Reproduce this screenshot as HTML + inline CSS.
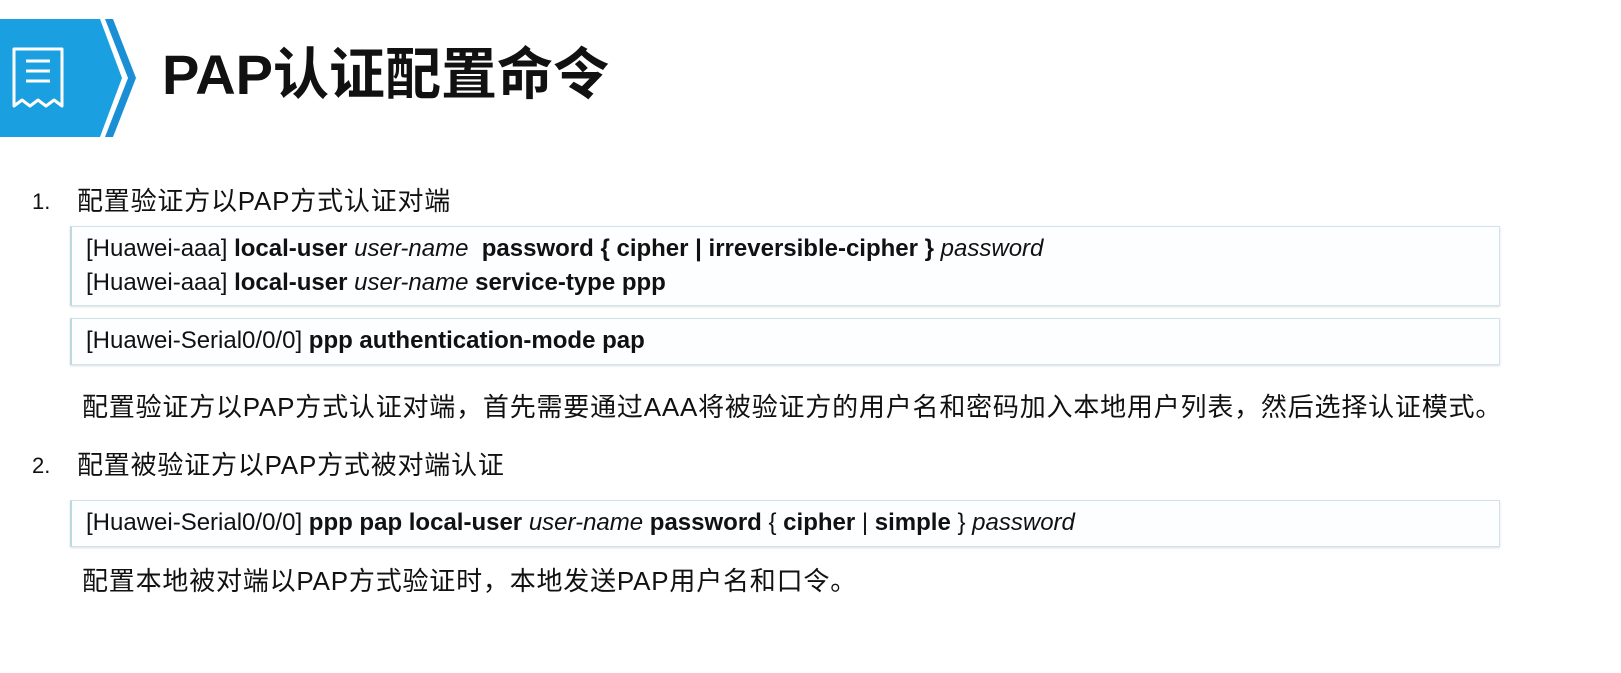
<!DOCTYPE html>
<html><head><meta charset="utf-8"><style>
body{margin:0;width:1621px;height:673px;background:#fff;position:relative;overflow:hidden;font-family:"Liberation Sans","Noto Sans CJK SC",sans-serif;color:#111}
.a{position:absolute;white-space:nowrap}
.box{position:absolute;left:70px;width:1427px;border:1px solid #cfe3ea;border-left:2px solid #bcd8e2;box-shadow:0 1px 2px #ddd;background:#fcfeff}
.cmd{font-size:24px;line-height:34px;padding-left:14px}
.cn{font-size:26px;letter-spacing:0.8px;line-height:34px}
.num{font-size:22px;line-height:34px}
b{font-weight:bold}i{font-style:italic}
</style></head><body>
<svg class="a" style="left:0;top:0" width="140" height="140">
<polygon points="0,19 100,19 122,78 100,137 0,137" fill="#1aa0e0"/>
<polygon points="105,19 113,19 136,78 113,137 105,137 128,78" fill="#1a8fd6"/>
<path d="M14 49 h48 v57 l-8 -6 l-8 6 l-8 -6 l-8 6 l-8 -6 l-8 6 z" fill="none" stroke="#fff" stroke-width="3" stroke-linejoin="round"/>
<path d="M26 61h24M26 71h24M26 81h24" stroke="#fff" stroke-width="3"/>
</svg>
<div class="a" style="left:162px;top:40px;font-size:56px;font-weight:bold;line-height:70px">PAP认证配置命令</div>
<div class="a num" style="left:32px;top:185px">1.</div>
<div class="a cn" style="left:77px;top:184px">配置验证方以PAP方式认证对端</div>
<div class="box" style="top:226px;height:78px"><div class="cmd" style="padding-top:5px">[Huawei-aaa] <b>local-user</b> <i>user-name</i>&nbsp; <b>password { cipher | irreversible-cipher }</b> <i>password</i><br>[Huawei-aaa] <b>local-user</b> <i>user-name</i> <b>service-type ppp</b></div></div>
<div class="box" style="top:318px;height:45px"><div class="cmd" style="padding-top:5px">[Huawei-Serial0/0/0] <b>ppp authentication-mode pap</b></div></div>
<div class="a cn" style="left:82px;top:390px">配置验证方以PAP方式认证对端，首先需要通过AAA将被验证方的用户名和密码加入本地用户列表，然后选择认证模式。</div>
<div class="a num" style="left:32px;top:449px">2.</div>
<div class="a cn" style="left:77px;top:448px">配置被验证方以PAP方式被对端认证</div>
<div class="box" style="top:500px;height:45px"><div class="cmd" style="padding-top:5px">[Huawei-Serial0/0/0] <b>ppp pap local-user</b> <i>user-name</i> <b>password</b> { <b>cipher</b> | <b>simple</b> } <i>password</i></div></div>
<div class="a cn" style="left:82px;top:564px">配置本地被对端以PAP方式验证时，本地发送PAP用户名和口令。</div>
</body></html>
